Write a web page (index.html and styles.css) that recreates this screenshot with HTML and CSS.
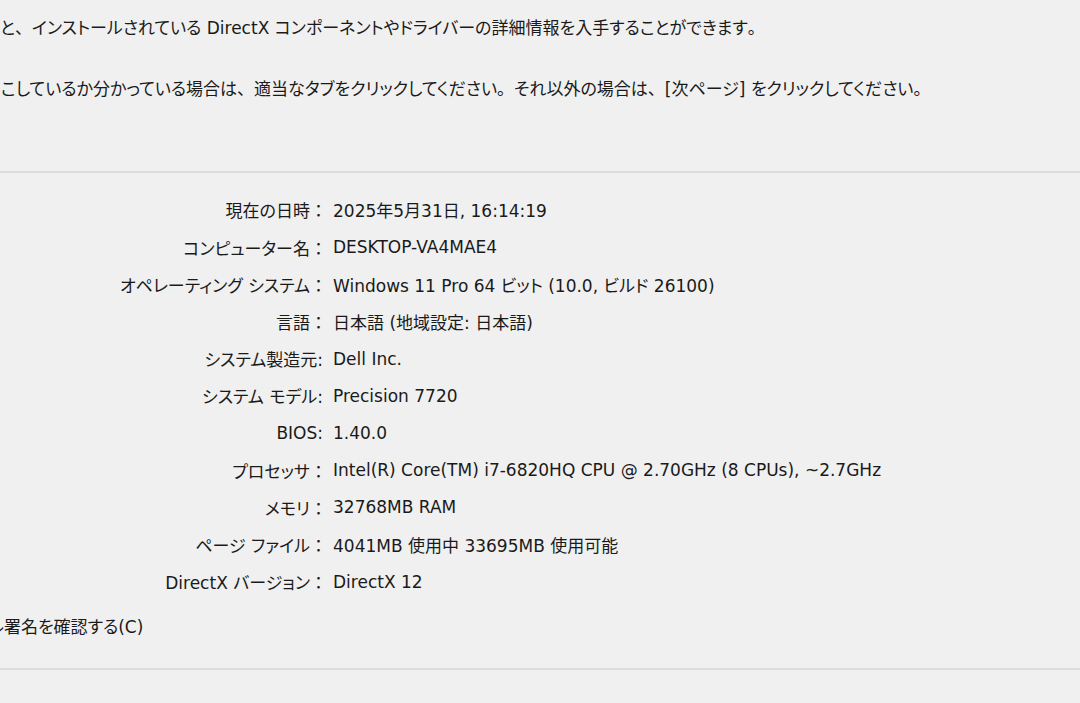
FILE: index.html
```html
<!DOCTYPE html>
<html lang="ja">
<head>
<meta charset="utf-8">
<title>DirectX 診断ツール</title>
<link rel="stylesheet" href="styles.css">
</head>
<body>
<div class="dialog">
  <section class="intro">
    <p class="intro-line">と<span class="fw">、</span>インストールされている DirectX コンポーネントやドライバーの詳細情報を入手することができます<span class="fw">。</span></p>
    <p class="intro-line second">こしているか分かっている場合は<span class="fw">、</span>適当なタブをクリックしてください<span class="fw">。</span>それ以外の場合は<span class="fw">、</span>[次ページ] をクリックしてください<span class="fw">。</span></p>
  </section>
  <section class="sysinfo">
    <dl class="info-grid">
      <dt>現在の日時<span class="colon">：</span></dt><dd>2025年5月31日, 16:14:19</dd>
      <dt>コンピューター名<span class="colon">：</span></dt><dd>DESKTOP-VA4MAE4</dd>
      <dt>オペレーティング システム<span class="colon">：</span></dt><dd>Windows 11 Pro 64 ビット (10.0, ビルド 26100)</dd>
      <dt>言語<span class="colon">：</span></dt><dd>日本語 (地域設定: 日本語)</dd>
      <dt>システム製造元:</dt><dd>Dell Inc.</dd>
      <dt>システム モデル:</dt><dd>Precision 7720</dd>
      <dt>BIOS:</dt><dd>1.40.0</dd>
      <dt>プロセッサ<span class="colon">：</span></dt><dd>Intel(R) Core(TM) i7-6820HQ CPU @ 2.70GHz (8 CPUs), ~2.7GHz</dd>
      <dt>メモリ<span class="colon">：</span></dt><dd>32768MB RAM</dd>
      <dt>ページ ファイル<span class="colon">：</span></dt><dd>4041MB 使用中 33695MB 使用可能</dd>
      <dt>DirectX バージョン<span class="colon">：</span></dt><dd>DirectX 12</dd>
    </dl>
    <div class="check-row"><span class="check-label">ル署名を確認する(C)</span></div>
  </section>
  <div class="bottom-area"></div>
</div>
</body>
</html>
```
FILE: styles.css
```css
html, body {
  margin: 0;
  padding: 0;
  background: #f0f0f0;
}
body {
  width: 1080px;
  height: 703px;
  overflow: hidden;
  font-family: "DejaVu Sans", "Noto Sans CJK JP", sans-serif;
  font-size: 17px;
  color: #1a1a1a;
  font-feature-settings: "palt";
}
.dialog {
  display: flex;
  flex-direction: column;
}
.intro {
  padding-top: 16px;
  height: 155px;
  border-bottom: 2px solid #dcdcdc;
}
.intro-line {
  margin: 0;
  line-height: 24px;
  white-space: nowrap;
}
.intro-line .fw {
  font-feature-settings: normal;
}
.intro-line.second {
  margin-top: 37px;
  padding-left: 1px;
}
.sysinfo {
  padding-top: 18.4px;
  height: 497px;
  border-bottom: 2px solid #dcdcdc;
  box-sizing: border-box;
}
.info-grid {
  margin: 0;
  display: grid;
  grid-template-columns: 323px auto;
  grid-auto-rows: 37.2px;
  column-gap: 10px;
  align-items: center;
}
.info-grid dt {
  text-align: right;
  white-space: nowrap;
}
.info-grid dt .colon {
  font-feature-settings: normal;
  margin-right: -4px;
}
.info-grid dd {
  margin: 0;
  white-space: nowrap;
}
.check-row {
  margin-top: 15px;
  line-height: 24px;
  overflow: hidden;
}
.check-label {
  display: inline-block;
  margin-left: -12px;
}
```
